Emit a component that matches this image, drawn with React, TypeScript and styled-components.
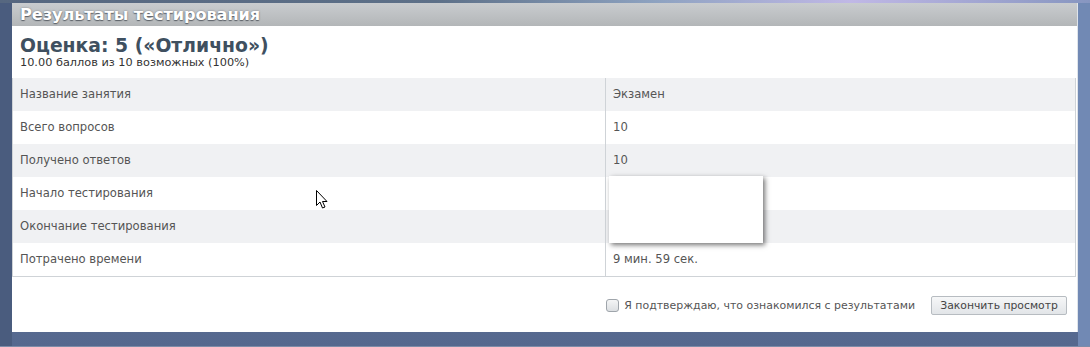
import React, { useState } from 'react';
import styled, { createGlobalStyle } from 'styled-components';

const GlobalStyle = createGlobalStyle`
  html, body {
    margin: 0;
    padding: 0;
    background: #4f6283;
  }
  body {
    font-family: "DejaVu Sans", Verdana, sans-serif;
  }
`;

const Page = styled.div`
  width: 1090px;
  height: 347px;
  box-sizing: border-box;
  position: relative;
  overflow: hidden;
  padding: 3px 12px 15px 12px;
  background:
    linear-gradient(90deg, #566780 0%, #5d7088 40%, #8da2c0 60%, #c0b8e6 78%, #8796c0 100%) top / 100% 3px no-repeat,
    linear-gradient(90deg, #4a5c7e 0, #4a5c7e 12px, transparent 12px, transparent 1078px, #7189b4 1078px),
    linear-gradient(180deg, #7189b4 0%, #55688e 100%);
  border-bottom: 1px solid #7d8ca8;
`;

const Panel = styled.section`
  width: 1066px;
  height: 329px;
  box-sizing: border-box;
  background: #fff;
  border-right: 1px solid #dfe4ea;
  display: flex;
  flex-direction: column;
`;

const Header = styled.header`
  height: 23px;
  background: linear-gradient(180deg, #c9cccf 0%, #b3b6b8 100%);
  display: flex;
  align-items: center;
  padding-left: 8px;
  font-family: "DejaVu Sans", Verdana, sans-serif;
  font-weight: bold;
  font-size: 16.2px;
  letter-spacing: -0.1px;
  color: #fff;
  text-shadow: 0 1px 1px #5c6168, 0 0 2px #7d8288;
`;

const Summary = styled.div`
  height: 52px;
  box-sizing: border-box;
  padding: 10px 0 0 8px;
  color: #3e4f5e;
`;

const Grade = styled.h2`
  margin: 0;
  font-size: 18.8px;
  line-height: 20px;
  font-weight: bold;
  color: #3f5060;
`;

const Score = styled.div`
  font-size: 11.3px;
  line-height: 13px;
  color: #333;
`;

const Table = styled.div`
  border: 1px solid #cfd3d7;
  border-top: none;
  margin-right: 1px;
`;

const Row = styled.div<{ $shaded: boolean }>`
  display: grid;
  grid-template-columns: 592px 1fr;
  height: 33px;
  background: ${p => (p.$shaded ? '#f0f1f3' : '#fff')};
  font-size: 11.6px;
  color: #555;
`;

const Cell = styled.div<{ $divider?: boolean }>`
  display: flex;
  align-items: center;
  padding: 0 0 1px 7px;
  border-left: ${p => (p.$divider ? '1px solid #cfd3d7' : 'none')};
`;

const Footer = styled.div`
  flex: 1;
  display: flex;
  align-items: center;
  justify-content: flex-end;
  padding: 2px 10px 0 0;
  gap: 16px;
`;

const Confirm = styled.label`
  display: flex;
  align-items: center;
  gap: 5px;
  font-size: 10.95px;
  color: #555;
`;

const Box = styled.span`
  width: 11px;
  height: 11px;
  border: 1px solid #9fa5ab;
  border-radius: 3px;
  background: linear-gradient(180deg, #f4f5f6 0%, #dcdfe2 100%);
  display: inline-block;
`;

const Button = styled.button`
  height: 19px;
  width: 136px;
  padding: 0;
  border: 1px solid #b7bcc1;
  border-radius: 2px;
  background: linear-gradient(180deg, #f6f7f8 0%, #e2e5e8 100%);
  font-family: "DejaVu Sans", Verdana, sans-serif;
  font-size: 10.8px;
  color: #444;
`;

const Popup = styled.div`
  position: absolute;
  left: 609px;
  top: 176px;
  width: 154px;
  height: 67px;
  background: #fff;
  box-shadow: 2px 2px 5px rgba(0, 0, 0, 0.55);
`;

const Cursor = styled.svg`
  position: absolute;
  left: 316px;
  top: 190px;
`;

const rows: [string, string][] = [
  ['Название занятия', 'Экзамен'],
  ['Всего вопросов', '10'],
  ['Получено ответов', '10'],
  ['Начало тестирования', ''],
  ['Окончание тестирования', ''],
  ['Потрачено времени', '9 мин. 59 сек.'],
];

export default function App() {
  const [checked, setChecked] = useState(false);
  return (
    <>
      <GlobalStyle />
      <Page>
        <Panel>
          <Header>Результаты тестирования</Header>
          <Summary>
            <Grade>Оценка: 5 («Отлично»)</Grade>
            <Score>10.00 баллов из 10 возможных (100%)</Score>
          </Summary>
          <Table>
            {rows.map(([label, value], i) => (
              <Row key={label} $shaded={i % 2 === 0}>
                <Cell>{label}</Cell>
                <Cell $divider>{value}</Cell>
              </Row>
            ))}
          </Table>
          <Footer>
            <Confirm onClick={() => setChecked(!checked)}>
              <Box />
              Я подтверждаю, что ознакомился с результатами
            </Confirm>
            <Button>Закончить просмотр</Button>
          </Footer>
        </Panel>
        <Popup />
        <Cursor width="13" height="20" viewBox="0 0 13 20">
          <path
            d="M0.5 0.5 L0.5 15.5 L4 12 L6.5 18 L9 17 L6.5 11.5 L11 11.5 Z"
            fill="#fff"
            stroke="#000"
            strokeWidth="1"
            strokeLinejoin="miter"
          />
        </Cursor>
      </Page>
    </>
  );
}
